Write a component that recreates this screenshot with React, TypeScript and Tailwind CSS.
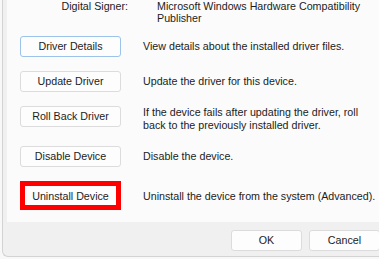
const FONT = "font-['Liberation_Sans',Arial,sans-serif]";

const ROWS: ReadonlyArray<{
  label: string;
  text: string[];
  focused?: boolean;
  marked?: boolean;
}> = [
  { label: "Driver Details", text: ["View details about the installed driver files."], focused: true },
  { label: "Update Driver", text: ["Update the driver for this device."] },
  {
    label: "Roll Back Driver",
    text: [
      "If the device fails after updating the driver, roll",
      "back to the previously installed driver.",
    ],
  },
  { label: "Disable Device", text: ["Disable the device."] },
  { label: "Uninstall Device", text: ["Uninstall the device from the system (Advanced)."], marked: true },
];

function ActionButton({ label, focused, marked }: { label: string; focused?: boolean; marked?: boolean }) {
  if (marked) {
    return (
      <div className="flex h-[29px] w-[101px] shrink-0 items-center justify-center border-[5px] border-[#ff0000] bg-[#fdfdfd] pt-[2px]">
        {label}
      </div>
    );
  }
  return (
    <div
      className={[
        "flex h-[21px] w-[101px] shrink-0 items-center justify-center rounded-[3px] border bg-[#fdfdfd]",
        focused ? "border-[#9cc3ea]" : "border-[#dcdcdc]",
      ].join(" ")}
    >
      {label}
    </div>
  );
}

export default function App() {
  return (
    <div className={`h-[259px] w-[379px] overflow-hidden bg-[#f8f8f8] text-[10.7px] leading-[13px] text-[#1c1c1c] ${FONT}`}>
      <div className="ml-[2px] flex h-[257px] flex-col rounded-bl-[6px] border-b border-l border-[#d3d3d3] bg-[#f0f0f0]">
        <div className="ml-[4px] flex h-[222px] flex-col bg-[#fbfbfb]">
          <div className="flex leading-[12px]">
            <div className="w-[121px] text-right">Digital Signer:</div>
            <div className="ml-[29px]">
              <div>Microsoft Windows Hardware Compatibility</div>
              <div>Publisher</div>
            </div>
          </div>

          <div className="mt-[12px] flex flex-col gap-[14px] pl-[13px]">
            {ROWS.map((r) => (
              <div
                key={r.label}
                className={["flex gap-[22px]", r.text.length > 1 ? "items-start" : "items-center"].join(" ")}
              >
                <ActionButton label={r.label} focused={r.focused} marked={r.marked} />
                <div className={r.marked ? "pt-[2px]" : ""}>
                  {r.text.map((t) => (
                    <div key={t}>{t}</div>
                  ))}
                </div>
              </div>
            ))}
          </div>
        </div>

        <div className="mt-[8px] mr-[-1px] flex justify-end gap-[7px]">
          <div className="flex h-[21px] w-[71px] items-center justify-center rounded-[3px] border border-[#dcdcdc] bg-[#fdfdfd]">
            OK
          </div>
          <div className="flex h-[21px] w-[71px] items-center justify-center rounded-[3px] border border-[#dcdcdc] bg-[#fdfdfd]">
            Cancel
          </div>
        </div>
      </div>
    </div>
  );
}
